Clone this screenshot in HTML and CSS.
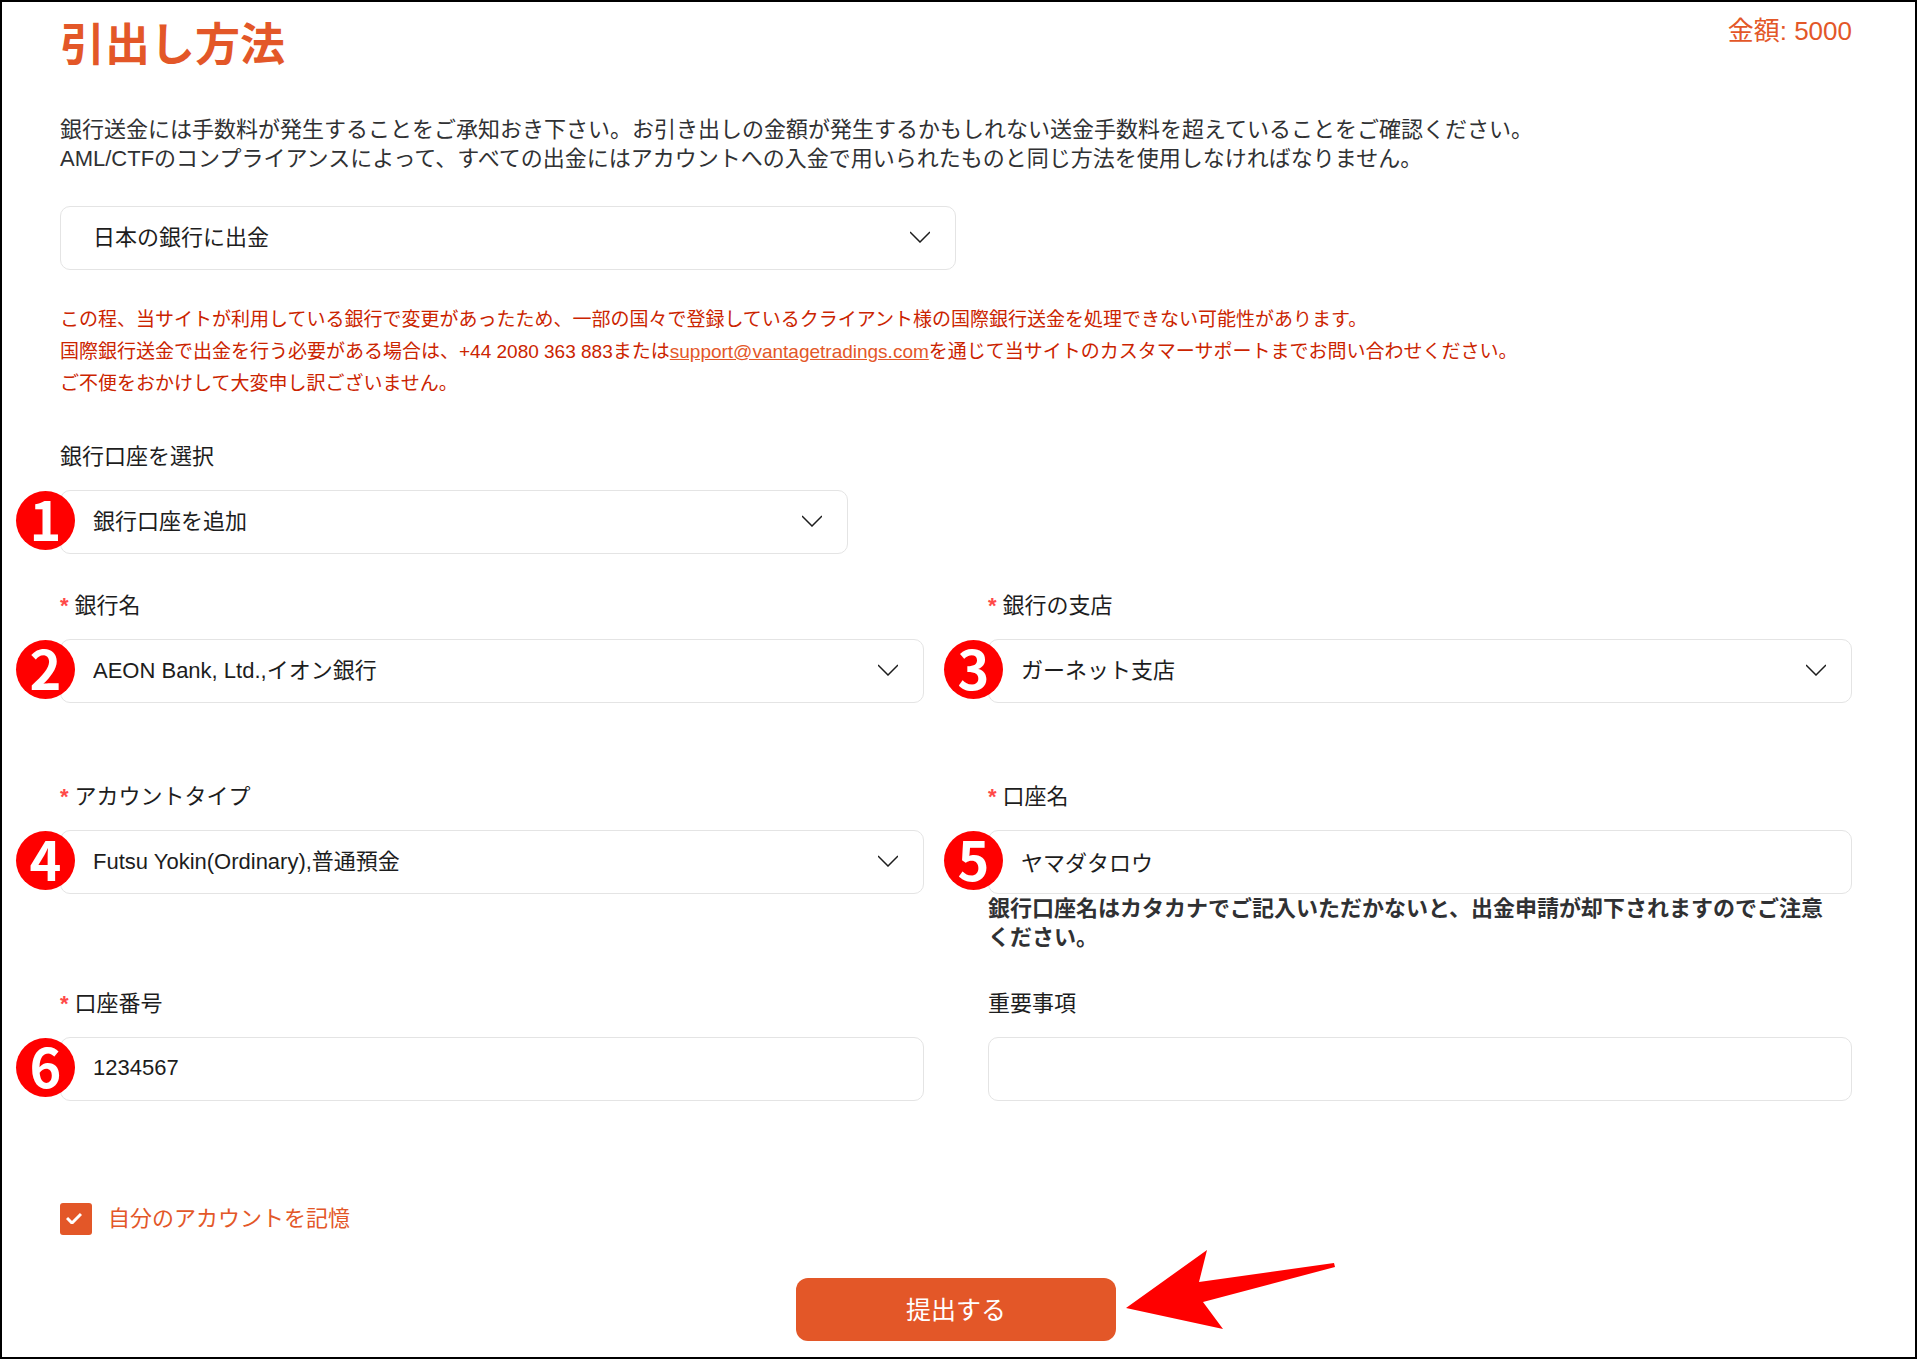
FILE: index.html
```html
<!DOCTYPE html>
<html lang="ja">
<head>
    <meta charset="UTF-8">
    <meta name="viewport" content="width=device-width, initial-scale=1.0">
    <title>引出し方法</title>
    <link rel="stylesheet" href="styles.css">
</head>
<body>
    <main class="page">
        <div class="header">
            <h1 class="title">引出し方法</h1>
            <div class="amount">金額: 5000</div>
        </div>

        <p class="intro">
            銀行送金には手数料が発生することをご承知おき下さい。お引き出しの金額が発生するかもしれない送金手数料を超えていることをご確認ください。<br>
            AML/CTFのコンプライアンスによって、すべての出金にはアカウントへの入金で用いられたものと同じ方法を使用しなければなりません。
        </p>

        <form class="form">
            <div class="control control-method">
                <select class="input" aria-label="引出し方法">
                    <option>日本の銀行に出金</option>
                </select>
                <svg class="chevron" viewBox="0 0 20 12"><path d="M0 1l10 10L20 1"/></svg>
            </div>

            <p class="notice">
                この程、当サイトが利用している銀行で変更があったため、一部の国々で登録しているクライアント様の国際銀行送金を処理できない可能性があります。<br>
                国際銀行送金で出金を行う必要がある場合は、+44 2080 363 883または<a href="mailto:support@vantagetradings.com">support@vantagetradings.com</a>を通じて当サイトのカスタマーサポートまでお問い合わせください。<br>
                ご不便をおかけして大変申し訳ございません。
            </p>

            <div class="field field-account">
                <label class="label" for="account">銀行口座を選択</label>
                <div class="control">
                    <select class="input" id="account">
                        <option>銀行口座を追加</option>
                    </select>
                    <svg class="chevron" viewBox="0 0 20 12"><path d="M0 1l10 10L20 1"/></svg>
                    <span class="badge">1</span>
                </div>
            </div>

            <!-- Bank details -->
            <div class="grid">
                <div class="field">
                    <label class="label required" for="bank">銀行名</label>
                    <div class="control">
                        <select class="input" id="bank">
                            <option>AEON Bank, Ltd.,イオン銀行</option>
                        </select>
                        <svg class="chevron" viewBox="0 0 20 12"><path d="M0 1l10 10L20 1"/></svg>
                        <span class="badge">2</span>
                    </div>
                </div>
                <div class="field">
                    <label class="label required" for="branch">銀行の支店</label>
                    <div class="control">
                        <select class="input" id="branch">
                            <option>ガーネット支店</option>
                        </select>
                        <svg class="chevron" viewBox="0 0 20 12"><path d="M0 1l10 10L20 1"/></svg>
                        <span class="badge">3</span>
                    </div>
                </div>
                <div class="field">
                    <label class="label required" for="type">アカウントタイプ</label>
                    <div class="control">
                        <select class="input" id="type">
                            <option>Futsu Yokin(Ordinary),普通預金</option>
                        </select>
                        <svg class="chevron" viewBox="0 0 20 12"><path d="M0 1l10 10L20 1"/></svg>
                        <span class="badge">4</span>
                    </div>
                </div>
                <div class="field">
                    <label class="label required" for="holder">口座名</label>
                    <div class="control">
                        <input class="input" id="holder" type="text" value="ヤマダタロウ">
                        <span class="badge">5</span>
                    </div>
                    <p class="hint">銀行口座名はカタカナでご記入いただかないと、出金申請が却下されますのでご注意ください。</p>
                </div>
                <div class="field">
                    <label class="label required" for="number">口座番号</label>
                    <div class="control">
                        <input class="input" id="number" type="text" value="1234567">
                        <span class="badge">6</span>
                    </div>
                </div>
                <div class="field">
                    <label class="label" for="notes">重要事項</label>
                    <div class="control">
                        <input class="input" id="notes" type="text">
                    </div>
                </div>
            </div>

            <div class="remember">
                <span class="check">
                    <input type="checkbox" id="remember" checked>
                    <svg class="tick" viewBox="0 0 16 12"><path d="M1 6l5 5 9-9"/></svg>
                </span>
                <label for="remember">自分のアカウントを記憶</label>
            </div>

            <div class="actions">
                <div class="submit-wrap">
                    <button class="submit" type="button">提出する</button>
                    <svg class="arrow" viewBox="0 0 210 80"><path d="M0 58L81 0l-8 32 135-19 1 4L77 52l20 27z"/></svg>
                </div>
            </div>
        </form>
    </main>
</body>
</html>
```

FILE: styles.css
```css
* { margin: 0; padding: 0; box-sizing: border-box; }
body {
    font-family: "Liberation Sans", "Noto Sans CJK JP", sans-serif;
    font-size: 22px;
    color: #303133;
    background: #fff;
}
.page {
    min-height: 100vh;
    padding: 13px 63px 16px 58px;
    border: 2px solid #000;
}

.header { display: flex; justify-content: space-between; align-items: flex-start; }
.title { font-size: 45px; line-height: 62px; font-weight: 700; color: #e35728; }
.amount { font-size: 26px; line-height: 32px; color: #e35728; }

.intro { margin-top: 38px; line-height: 29px; }
.form { margin-top: 33px; }

.control { position: relative; }
.control-method { width: 50%; }
.input {
    display: block;
    width: 100%;
    height: 64px;
    padding: 0 32px 2px;
    border: 1px solid #e4e4e4;
    border-radius: 10px;
    background: #fff;
    color: #1d1d1d;
    font: inherit;
    appearance: none;
}
.chevron {
    position: absolute;
    right: 26px;
    top: 25px;
    width: 20px;
    height: 12px;
    fill: none;
    stroke: #1d1d1d;
    stroke-width: 1.5;
    pointer-events: none;
}

.notice { margin-top: 34px; font-size: 19px; line-height: 32px; color: #cb2400; }
.notice a { color: #e35728; }

.label { display: block; margin-bottom: 17px; line-height: 32px; color: #1d1d1d; }
.required::before { content: "*"; margin-right: 6px; color: #ff4949; font-weight: 700; }
.field-account { width: 44%; margin-top: 41px; }

.grid { display: grid; grid-template-columns: 1fr 1fr; gap: 36px 64px; margin-top: 36px; }
.grid .field { min-height: 155px; }
.hint { padding-right: 10px; line-height: 29px; font-weight: 700; }

.badge {
    position: absolute;
    left: -44px;
    top: 1px;
    width: 59px;
    height: 59px;
    border-radius: 50%;
    background: #f00;
    color: #fff;
    font-family: "Noto Sans CJK JP", sans-serif;
    font-size: 54px;
    font-weight: 700;
    line-height: 53px;
    text-align: center;
}

.remember { display: flex; align-items: center; gap: 16px; margin-top: 60px; line-height: 32px; color: #e35728; }
.check { position: relative; width: 32px; height: 32px; }
.check input {
    display: block;
    width: 32px;
    height: 32px;
    border-radius: 3px;
    appearance: none;
}
.check input:checked { background: #e35728; }
.tick {
    position: absolute;
    left: 6px;
    top: 9px;
    width: 16px;
    height: 12px;
    fill: none;
    stroke: #fff;
    stroke-width: 3;
    pointer-events: none;
}

.actions { display: flex; justify-content: center; margin-top: 43px; }
.submit-wrap { position: relative; }
.submit {
    display: block;
    width: 320px;
    height: 63px;
    padding-bottom: 3px;
    border: none;
    border-radius: 12px;
    background: #e35728;
    color: #fff;
    font-family: inherit;
    font-size: 25px;
    cursor: pointer;
}
.arrow { position: absolute; left: 330px; top: -28px; width: 210px; height: 80px; fill: #f00; }
```
